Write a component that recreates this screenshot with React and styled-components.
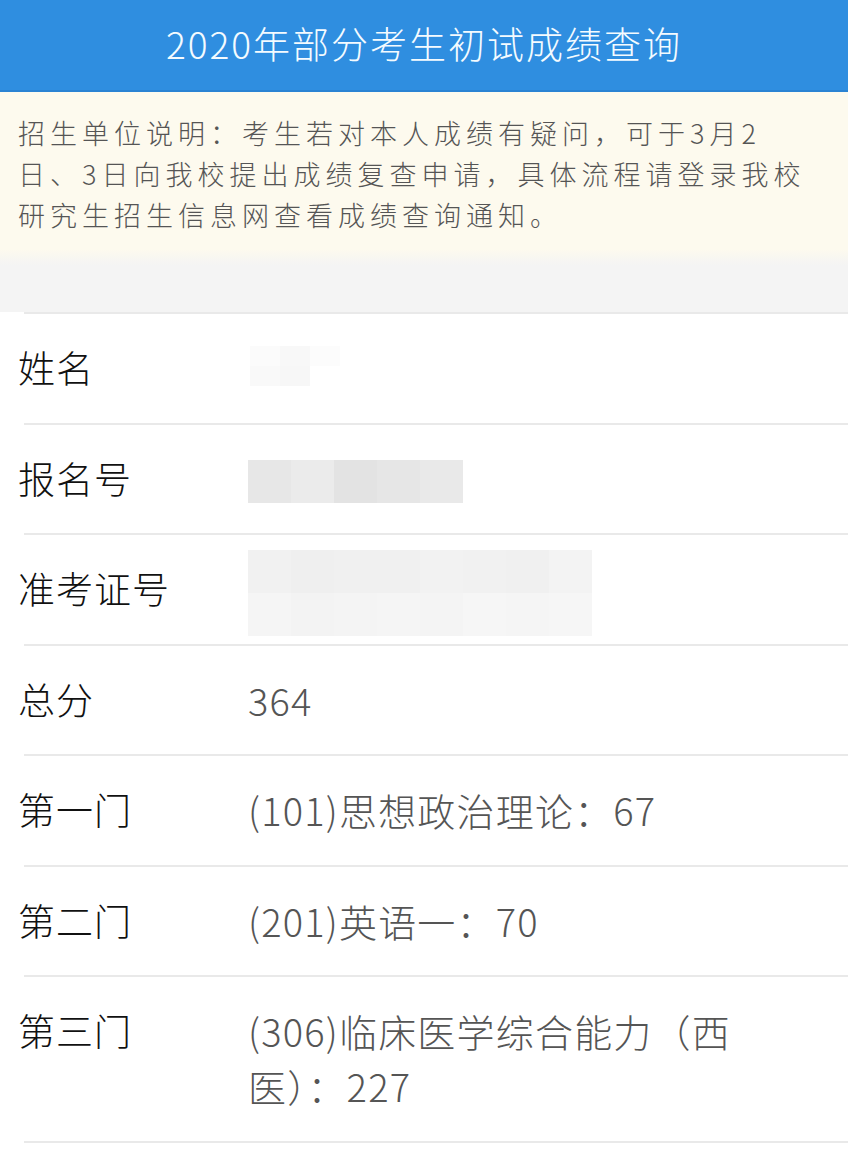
import React from 'react';
import styled, { createGlobalStyle } from 'styled-components';

const GlobalStyle = createGlobalStyle`
  html, body {
    margin: 0;
    padding: 0;
    background: #ffffff;
  }
  body {
    font-family: "Noto Sans CJK SC", "Noto Sans", sans-serif;
    -webkit-font-smoothing: antialiased;
  }
`;

const Page = styled.div`
  width: 848px;
  min-height: 1150px;
  background: #ffffff;
`;

const Header = styled.header`
  height: 92px;
  background: #2f8ee0;
  border-bottom: 2px solid #2a83d3;
  box-sizing: border-box;
  display: flex;
  align-items: center;
  justify-content: center;
  padding-bottom: 3px;
`;

const Title = styled.h1`
  margin: 0;
  font-size: 37px;
  font-weight: 300;
  letter-spacing: 2px;
  color: #f4fbff;
  line-height: 1;
`;

const Notice = styled.p`
  margin: 0;
  padding: 20px 18px 14px;
  background: #fdfaee;
  color: #555555;
  font-size: 27px;
  font-weight: 300;
  line-height: 41px;
  letter-spacing: 5px;
`;

const Gap = styled.div`
  height: 63px;
  background: linear-gradient(#fdfaee 0px, #f4f4f4 16px, #f4f4f4 100%);
`;

const Divider = styled.div`
  height: 2px;
  margin-left: 24px;
  background: #e9e9e9;
`;

const Row = styled.div`
  display: flex;
  align-items: flex-start;
  min-height: 108.5px;
  box-sizing: border-box;
  padding: 26px 0 27.5px 18px;
`;

const Label = styled.div`
  flex: 0 0 230px;
  font-size: 37px;
  font-weight: 300;
  line-height: 55px;
  letter-spacing: 1px;
  color: #111111;
`;

const Value = styled.div`
  width: 496px;
  font-size: 38px;
  font-weight: 300;
  line-height: 55px;
  letter-spacing: 1.2px;
  color: #555555;
`;

const Masked = styled.div`
  height: 55px;
  display: flex;
  align-items: center;
  margin-left: ${p => p.$shift || 0}px;
`;

const Pixels = styled.div`
  flex-shrink: 0;
  display: grid;
  grid-template-columns: repeat(${p => p.$cols}, ${p => p.$cell}px);
  grid-auto-rows: ${p => p.$rowHeight}px;
  transform: translateY(${p => p.$dy || 0}px);
`;

const Pixel = styled.span`
  background: ${p => p.$shade};
`;

const Redacted = ({ cols, cell, rowHeight, shades, dy, shift }) => (
  <Masked $shift={shift}>
    <Pixels $cols={cols} $cell={cell} $rowHeight={rowHeight} $dy={dy}>
      {shades.map((s, i) => (
        <Pixel key={i} $shade={s} />
      ))}
    </Pixels>
  </Masked>
);

const rows = [
  {
    label: '姓名',
    masked: {
      cols: 3,
      cell: 30,
      rowHeight: 20,
      dy: -2,
      shift: 2,
      shades: ['#fbfbfb', '#f8f8f8', '#fcfcfc', '#f9f9f9', '#f7f7f7', '#ffffff'],
    },
  },
  {
    label: '报名号',
    masked: {
      cols: 5,
      cell: 43,
      rowHeight: 43,
      dy: 3,
      shades: ['#e7e7e7', '#ebebeb', '#e3e3e3', '#e6e6e6', '#e9e9e9'],
    },
  },
  {
    label: '准考证号',
    masked: {
      cols: 8,
      cell: 43,
      rowHeight: 43,
      dy: 4,
      shades: [
        '#f1f1f1', '#efefef', '#f0f0f0', '#f0f0f0', '#f2f2f2', '#f1f1f1', '#f0f0f0', '#f3f3f3',
        '#f5f5f5', '#f3f3f3', '#f4f4f4', '#f5f5f5', '#f4f4f4', '#f6f6f6', '#f5f5f5', '#f6f6f6',
      ],
    },
  },
  { label: '总分', value: '364' },
  { label: '第一门', value: '(101)思想政治理论：67' },
  { label: '第二门', value: '(201)英语一：70' },
  { label: '第三门', value: '(306)临床医学综合能力（西医）：227' },
];

const App = () => (
  <Page>
    <GlobalStyle />
    <Header>
      <Title>2020年部分考生初试成绩查询</Title>
    </Header>
    <Notice>
      招生单位说明：考生若对本人成绩有疑问，可于3月2
      <br />
      日、3日向我校提出成绩复查申请，具体流程请登录我校
      <br />
      研究生招生信息网查看成绩查询通知。
    </Notice>
    <Gap />
    <Divider />
    {rows.map(row => (
      <React.Fragment key={row.label}>
        <Row>
          <Label>{row.label}</Label>
          <Value>{row.masked ? <Redacted {...row.masked} /> : row.value}</Value>
        </Row>
        <Divider />
      </React.Fragment>
    ))}
  </Page>
);

export default App;
